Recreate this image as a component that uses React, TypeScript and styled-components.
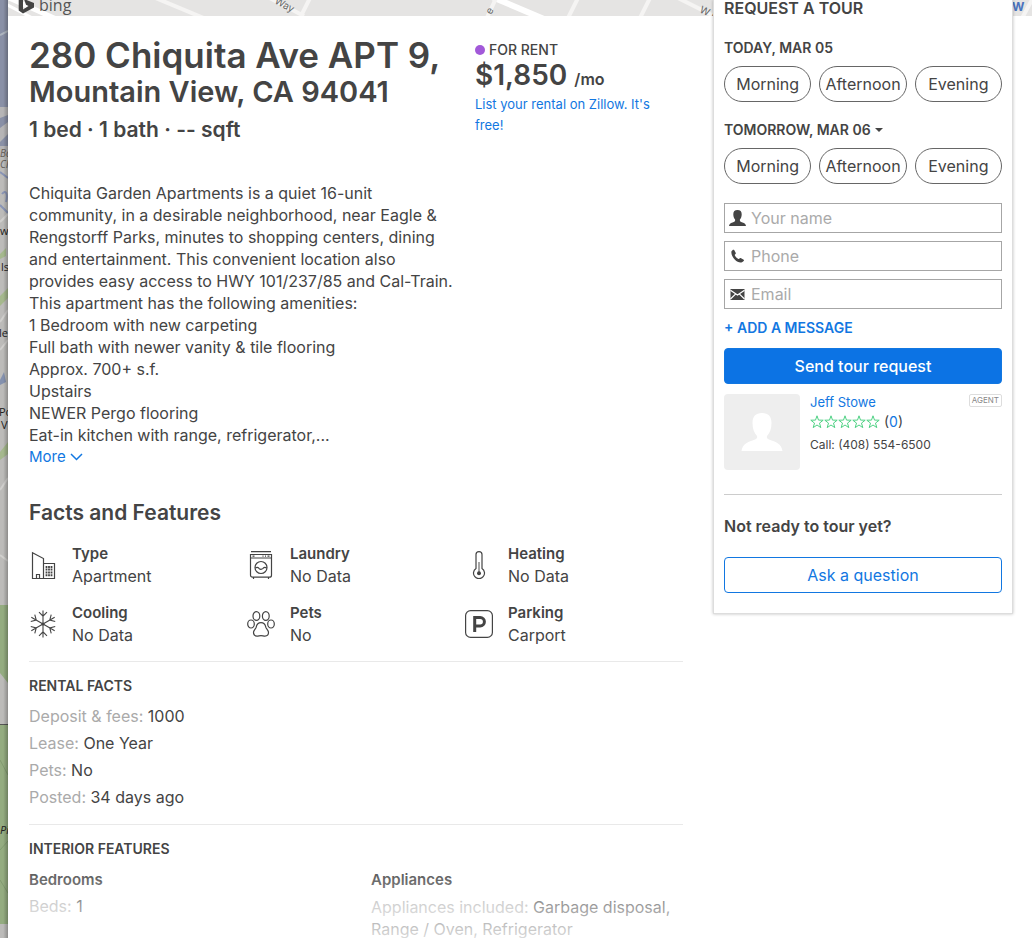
import React from "react";
import styled, { createGlobalStyle } from "styled-components";

const ink = "#444";
const blue = "#1277e1";
const font = 'Inter, "Liberation Sans", sans-serif';

const GlobalStyle = createGlobalStyle`
  *, *::before, *::after { box-sizing: border-box; }
  body { margin: 0; background: #fff; color: ${ink}; font-family: ${font}; font-size: 16px; line-height: 22px; }
  h1, h2, h3, h4, p, dl, dd { margin: 0; font-weight: inherit; font-size: inherit; }
  button, input { font: inherit; color: inherit; }
  a { color: ${blue}; text-decoration: none; }
`;

const Page = styled.div`
  display: grid;
  grid-template-columns: 8px minmax(0, 1fr);
  min-height: 100vh;
`;

const MapStrip = styled.div`
  position: relative;
  overflow: hidden;
  background: #bcbbb9;
  svg { position: absolute; top: 0; left: 0; }
  &::after {
    content: "";
    position: absolute;
    inset: 0;
    background: linear-gradient(to right, transparent 40%, rgba(0, 0, 0, 0.25));
  }
`;

const Sheet = styled.div`
  display: grid;
  grid-template-columns: minmax(0, 1fr) 300px 19px;
  grid-template-rows: 16px auto;
  background: #fff;
`;

const Banner = styled.div`
  grid-column: 1 / -1;
  grid-row: 1;
  overflow: hidden;
  background: #e5e4e3;
  svg { display: block; }
`;

const Main = styled.main`
  grid-column: 1;
  grid-row: 2;
  padding: 17px 30px 0 21px;
`;

const Summary = styled.header`
  display: grid;
  grid-template-columns: minmax(0, 1fr) 190px;
  column-gap: 30px;
  padding-right: 18px;
`;

const Address = styled.h1`
  font-weight: 600;
`;

const Street = styled.span`
  display: block;
  font-size: 35px;
  line-height: 44px;
  white-space: nowrap;
`;

const City = styled.span`
  display: block;
  font-size: 29px;
  line-height: 30px;
  white-space: nowrap;
`;

const Size = styled.p`
  margin-top: 10px;
  font-size: 21px;
  font-weight: 600;
  line-height: 26px;
`;

const PriceBox = styled.div`
  padding-top: 9px;
  font-size: 13px;
  line-height: 21px;
`;

const Status = styled.p`
  display: flex;
  align-items: center;
  gap: 4px;
  font-size: 14px;
  font-weight: 500;
  line-height: 16px;
`;

const Dot = styled.span`
  width: 10px;
  height: 10px;
  border-radius: 50%;
  background: #a259d9;
`;

const Price = styled.p`
  margin-bottom: 1px;
  font-size: 28px;
  font-weight: 600;
  line-height: 35px;
  small { font-size: 16px; line-height: 16px; }
`;

const ListLink = styled.a`
  display: block;
`;

const Description = styled.div`
  max-width: 424px;
  margin-top: 39px;
`;

const MoreButton = styled.button`
  display: flex;
  align-items: center;
  gap: 4px;
  padding: 0;
  border: 0;
  background: none;
  color: ${blue};
  font-size: 15px;
`;

const Heading = styled.h2`
  margin-top: 32px;
  font-size: 21px;
  font-weight: 600;
  line-height: 26px;
`;

const FactGrid = styled.div`
  display: grid;
  grid-template-columns: repeat(3, 1fr);
  row-gap: 15px;
  margin-top: 17px;
`;

const Fact = styled.div`
  display: flex;
  align-items: center;
  gap: 15px;
  h3 { font-size: 15px; font-weight: 600; }
`;

const Section = styled.section`
  margin-top: 15px;
  padding: 15px 0 13px;
  border-top: 1px solid #e9e9e9;
`;

const Collapsed = styled(Section)`
  position: relative;
  max-height: 114px;
  margin-top: 0;
  padding-bottom: 0;
  overflow: hidden;
  &::after {
    content: "";
    position: absolute;
    inset: auto 0 0 0;
    height: 78px;
    background: linear-gradient(rgba(255, 255, 255, 0), rgba(255, 255, 255, 0.8));
  }
`;

const Caps = styled.h3`
  margin-bottom: 8px;
  font-size: 14px;
  font-weight: 600;
  line-height: 18px;
`;

const Detail = styled.p<{ $wrapped?: boolean }>`
  padding: ${(p) => (p.$wrapped ? "3px 0 0" : "0")};
  line-height: ${(p) => (p.$wrapped ? "22px" : "27px")};
  span { color: #aaa; }
`;

const Columns = styled.div`
  display: grid;
  grid-template-columns: repeat(2, 1fr);
  column-gap: 30px;
`;

const SubHeading = styled.h4`
  font-size: 15px;
  font-weight: 600;
  line-height: 27px;
`;

const TourPanel = styled.aside`
  grid-column: 2;
  grid-row: 1 / 3;
  align-self: start;
  z-index: 1;
  padding: 0 10px 20px;
  border: 1px solid #ddd;
  border-top: 0;
  background: #fff;
  box-shadow: 0 0 3px rgba(0, 0, 0, 0.25);
`;

const PanelTitle = styled.h2`
  margin-bottom: 24px;
  font-weight: 600;
  line-height: 16px;
`;

const Day = styled.div`
  display: flex;
  align-items: center;
  margin-bottom: 10px;
  font-size: 14px;
  font-weight: 600;
  line-height: 16px;
`;

const DayPicker = styled.button`
  display: flex;
  align-items: center;
  gap: 4px;
  padding: 0;
  border: 0;
  background: none;
`;

const Slots = styled.div`
  display: grid;
  grid-template-columns: repeat(3, 1fr);
  gap: 8px;
  margin-bottom: 20px;
`;

const Slot = styled.button`
  height: 36px;
  padding: 0;
  border: 1px solid #666;
  border-radius: 18px;
  background: #fff;
`;

const Form = styled.form`
  display: grid;
  gap: 8px;
  margin-top: -1px;
`;

const Field = styled.label`
  display: flex;
  align-items: center;
  gap: 4px;
  height: 30px;
  padding-left: 4px;
  border: 1px solid #a6a6a6;
  svg { flex: none; }
  input {
    flex: 1;
    min-width: 0;
    padding: 0;
    border: 0;
    outline: 0;
    background: none;
  }
  input::placeholder { color: #aaa; opacity: 1; }
`;

const AddMessage = styled.button`
  justify-self: start;
  margin: 3px 0 4px;
  padding: 0;
  border: 0;
  background: none;
  color: ${blue};
  font-size: 14px;
  font-weight: 600;
  line-height: 16px;
`;

const WideButton = styled.button<{ $primary?: boolean }>`
  width: 100%;
  height: 36px;
  border: 1px solid ${blue};
  border-radius: 4px;
  background: ${(p) => (p.$primary ? "#0c73e4" : "#fff")};
  color: ${(p) => (p.$primary ? "#fff" : blue)};
  font-weight: ${(p) => (p.$primary ? 500 : 400)};
`;

const Agent = styled.div`
  display: grid;
  grid-template-columns: 76px 1fr auto;
  column-gap: 10px;
  align-items: start;
  margin: 10px 0 24px;
`;

const AgentInfo = styled.div`
  font-size: 13px;
  line-height: 16px;
`;

const Rating = styled.div`
  display: flex;
  align-items: center;
  gap: 4px;
  margin: 3px 0 6px;
  font-size: 14px;
  line-height: 18px;
`;

const Call = styled.p`
  font-size: 12px;
`;

const Tag = styled.span`
  padding: 0 2px;
  border: 1px solid #ddd;
  border-radius: 2px;
  color: #888;
  font-size: 8px;
  line-height: 11px;
`;

const NotReady = styled.h3`
  padding: 20px 0;
  border-top: 1px solid #ccc;
  font-weight: 600;
`;

const lineIcon = {
  width: 28,
  height: 28,
  viewBox: "0 0 28 28",
  fill: "none",
  stroke: ink,
  strokeWidth: 1.2,
  "aria-hidden": true,
} as const;

const BuildingIcon = () => (
  <svg {...lineIcon}>
    <path d="M3.500 27.500V1.800l11 5.700v20zM14.500 12.500h11v15h-11M7.500 27.500v-4h3v4" />
    <path d="M17.500 15v10.500M20 15v10.500M22.500 15v10.500" strokeWidth="1.800" strokeDasharray="2 0.600 2 1" />
  </svg>
);

const WasherIcon = () => (
  <svg {...lineIcon}>
    <path d="M4 .6h20M3.500 3.500h21v20.700a2 2 0 0 1-2 2h-17a2 2 0 0 1-2-2zM3.500 7h21M6.500 26.500v1.500M21.500 26.500v1.500" />
    <path d="M5.500 5.200h2M15.500 5.200h1M18 5.200h1M20.500 5.200h2" />
    <circle cx="14" cy="16.500" r="6" />
    <path d="M8.300 17c1.400-1 2.600-1 3.700.3 1.200 1.300 2.700 1.300 4 0 1.100-1.200 2.400-1.200 3.700-.3" />
  </svg>
);

const HeatIcon = () => (
  <svg {...lineIcon}>
    <path d="M11 17.500V3.600a3 3 0 0 1 6 0v13.900a5.500 5.500 0 1 1-6 0z" />
    <path d="M14 11v11" strokeWidth="1.500" stroke="#888" />
    <circle cx="14" cy="22.300" r="2" fill={ink} stroke="none" />
  </svg>
);

const SnowIcon = () => (
  <svg {...lineIcon} strokeWidth={1.1}>
    {[0, 60, 120, 180, 240, 300].map((angle) => (
      <path key={angle} transform={`rotate(${angle} 14 14)`} d="M14 14V.5M10 2.200 14 6.200l4-4" />
    ))}
    <circle cx="14" cy="14" r="1.600" fill={ink} stroke="none" />
  </svg>
);

const PawIcon = () => (
  <svg {...lineIcon}>
    <ellipse cx="9.400" cy="6" rx="3.400" ry="4.400" />
    <ellipse cx="18.800" cy="6" rx="3.400" ry="4.400" />
    <ellipse cx="4" cy="14" rx="3.300" ry="4" />
    <ellipse cx="24" cy="14" rx="3.300" ry="4" />
    <path d="M14 12.600c3 0 4.300 2 4.800 4.600.4 1.700 2.700 2.800 2.700 5.400 0 2.200-1.500 3.500-3.500 3.500-1.600 0-2.400-.5-4-.5s-2.400.5-4 .5c-2 0-3.500-1.300-3.500-3.500 0-2.600 2.300-3.700 2.700-5.400.5-2.600 1.800-4.600 4.800-4.600z" />
  </svg>
);

const ParkingIcon = () => (
  <svg {...lineIcon}>
    <rect x=".6" y=".6" width="26.800" height="26.800" rx="5" />
    <path d="M9.700 22V7.500h5.500a4.200 4.200 0 0 1 0 8.400H9.700" strokeWidth="3" />
  </svg>
);

const PersonIcon = () => (
  <svg width="18" height="18" viewBox="0 0 18 18" fill={ink} aria-hidden="true">
    <path d="M8.500 1c2.800 0 4.300 1.500 4.200 4.200 0 2.100-.6 4-1.800 5.200-.3 2 .6 2.300 2.600 3 2.100.7 3.300 1.500 3.500 3.600H0c.2-2.100 1.400-2.900 3.500-3.600 2-.7 2.900-1 2.600-3C4.900 9.200 4.300 7.300 4.300 5.200 4.200 2.500 5.700 1 8.500 1z" />
  </svg>
);

const PhoneIcon = () => (
  <svg width="18" height="18" viewBox="0 0 18 18" fill={ink} aria-hidden="true">
    <path d="M2.500 4.200c.9-1.300 2-2 2.700-1.100L6.800 6c.4.8-1.300 1.500-1 2.200.9 1.700 2 2.900 3.600 3.700.8.4 1.400-1.300 2.300-.9l3 1.800c.9.600-.3 2-1.700 2.500C8 17 1.300 9 2.500 4.200z" />
  </svg>
);

const MailIcon = () => (
  <svg width="18" height="18" viewBox="0 0 18 18" aria-hidden="true">
    <path fill={ink} d="M1.500 4h14v11h-14z" />
    <path fill="none" stroke="#fff" strokeWidth="1.200" d="m1.500 5.300 7 4.800 7-4.800M1.500 14l5-4.900M15.500 14l-5-4.900" />
  </svg>
);

const AvatarIcon = () => (
  <svg width="76" height="76" viewBox="0 0 76 76" aria-hidden="true">
    <rect width="76" height="76" rx="4" fill="#eee" />
    <path fill="#fff" d="M38 19c6.500 0 9.500 3.500 9.500 10 0 6-1.800 10-4.500 13-.5 1.800.2 3 2 3.600C52 48 57.500 50 58.500 57h-41C18.500 50 24 48 31 45.600c1.800-.6 2.500-1.800 2-3.600-2.700-3-4.500-7-4.500-13 0-6.500 3-10 9.500-10z" />
  </svg>
);

const Stars = () => (
  <svg width="70" height="14" viewBox="0 0 70 14" fill="none" stroke="#4fd184" aria-hidden="true">
    {[0, 14, 28, 42, 56].map((x) => (
      <path key={x} transform={`translate(${x} 0)`} d="M7 .8 8.500 5.100l4.700.1-3.700 2.900 1.300 4.500L7 10l-3.800 2.600 1.300-4.500L.8 5.200l4.700-.1z" />
    ))}
  </svg>
);

const BannerMap = () => (
  <svg width="1024" height="16" viewBox="8 0 1024 16" aria-hidden="true">
    <g fill="none" stroke="#fff">
      <path d="M0-6 72 26" strokeWidth="5" />
      <path d="M0 1 40 22" strokeWidth="3" />
      <path d="m485-6 66 28" strokeWidth="6" />
    </g>
    <g fill="none" stroke="#f5f4f3" strokeWidth="4">
      <path d="m146-6 72 30M262-6l42 22M312-6l-14 28M498-6l-14 30M580-6l-14 28M652-6l-14 28M670-6l56 28M1034-4l-14 26" />
    </g>
    <g fontFamily={font} fontSize="10" fill="#666">
      <text x="274" y="3" transform="rotate(28 274 3)">Way</text>
      <text x="491" y="15" transform="rotate(-60 491 15)">e</text>
      <text x="699" y="12" transform="rotate(25 699 12)">W M</text>
    </g>
    <text x="1003" y="11" fontFamily={font} fontSize="12" fontWeight="700" fill="#4a73bd">OW</text>
    <path fill="#444" d="M18.700-4 23-2.500V9.500L28.500 6 26 4.800 24-1l10 4v4.500l-11 6-4.300-3z" />
    <text x="39" y="11" fontFamily='"Open Sans", sans-serif' fontSize="16" fill="#555">bing</text>
  </svg>
);

const StripMap = () => (
  <svg width="8" height="938" viewBox="0 0 8 938" aria-hidden="true">
    <path fill="#8990a6" d="M0 0h8v152H0z" />
    <path fill="#b6b5b6" d="M0 107h8v8l-8 3zM0 128l8-6v12l-8 8zM0 146h8v10H0z" />
    <path fill="none" stroke="#aeb5bf" strokeWidth="2" d="m0 35 8-4" />
    <path fill="none" stroke="#8994b5" strokeWidth="2" d="m0 172 8 6M2 194c4-5 6 0 4 8M0 205l8 8" />
    <path fill="none" stroke="#d0cfcd" strokeWidth="2" d="m0 222 8-8M0 350l8-10M0 322l8-12M0 490l8-12M0 555l8 6" />
    <path fill="#a5b88d" d="m0 254 6-6v8l-6 3zM0 296l8-8v10l-8 8zM0 452l8-10v12l-8 6z" />
    <path fill="#8491ae" d="m0 380 4-8 2 10-6 3z" />
    <path fill="#94ac80" d="M0 605h8v78l-8-10zM0 725h8v199H0z" />
    <path stroke="#555" d="M0 724.500h8" />
    <path fill="none" stroke="#829b70" d="m0 760 8 15M0 850l8-9M0 880l8 13" />
    <g fontFamily='"Open Sans", sans-serif' fontSize="11" fill="#222">
      <g fontStyle="italic" fontSize="10" fill="#665f59">
        <text x="0" y="157">Ba</text>
        <text x="0" y="168">Cl</text>
      </g>
      <text x="0" y="235">w</text>
      <text x="1" y="271">ls</text>
      <text x="-1" y="337">le</text>
      <text x="-1" y="416">Po</text>
      <text x="1" y="429">V</text>
      <text x="0" y="834" fontStyle="italic">Pi</text>
    </g>
  </svg>
);

const facts = [
  { name: "Type", value: "Apartment", icon: <BuildingIcon /> },
  { name: "Laundry", value: "No Data", icon: <WasherIcon /> },
  { name: "Heating", value: "No Data", icon: <HeatIcon /> },
  { name: "Cooling", value: "No Data", icon: <SnowIcon /> },
  { name: "Pets", value: "No", icon: <PawIcon /> },
  { name: "Parking", value: "Carport", icon: <ParkingIcon /> },
];

const rentalFacts = [
  ["Deposit & fees:", "1000"],
  ["Lease:", "One Year"],
  ["Pets:", "No"],
  ["Posted:", "34 days ago"],
];

const amenities = [
  "1 Bedroom with new carpeting",
  "Full bath with newer vanity & tile flooring",
  "Approx. 700+ s.f.",
  "Upstairs",
  "NEWER Pergo flooring",
  "Eat-in kitchen with range, refrigerator,...",
];

const TimeSlots = () => (
  <Slots>
    {["Morning", "Afternoon", "Evening"].map((slot) => (
      <Slot key={slot} type="button">{slot}</Slot>
    ))}
  </Slots>
);

export default function App() {
  return (
    <Page>
      <GlobalStyle />
      <MapStrip><StripMap /></MapStrip>
      <Sheet>
        <Banner><BannerMap /></Banner>
        <Main>
          <Summary>
            <div>
              <Address>
                <Street>280 Chiquita Ave APT 9,</Street>
                <City>Mountain View, CA 94041</City>
              </Address>
              <Size>1 bed · 1 bath · -- sqft</Size>
            </div>
            <PriceBox>
              <Status><Dot />FOR RENT</Status>
              <Price>$1,850 <small>/mo</small></Price>
              <ListLink href="#list">List your rental on Zillow. It's free!</ListLink>
            </PriceBox>
          </Summary>

          <Description>
            <p>
              Chiquita Garden Apartments is a quiet 16-unit community, in a desirable neighborhood, near Eagle &amp;
              Rengstorff Parks, minutes to shopping centers, dining and entertainment. This convenient location also
              provides easy access to HWY 101/237/85 and Cal-Train.
            </p>
            <p>This apartment has the following amenities:</p>
            {amenities.map((line) => <p key={line}>{line}</p>)}
            <MoreButton type="button">
              More
              <svg width="13" height="8" viewBox="0 0 13 8" fill="none" stroke={blue} strokeWidth="1.500" aria-hidden="true">
                <path d="m1 1 5.500 5.500L12 1" />
              </svg>
            </MoreButton>
          </Description>

          <Heading>Facts and Features</Heading>
          <FactGrid>
            {facts.map((fact) => (
              <Fact key={fact.name}>
                {fact.icon}
                <div>
                  <h3>{fact.name}</h3>
                  <p>{fact.value}</p>
                </div>
              </Fact>
            ))}
          </FactGrid>

          <Section>
            <Caps>RENTAL FACTS</Caps>
            {rentalFacts.map(([name, value]) => (
              <Detail key={name}><span>{name}</span> {value}</Detail>
            ))}
          </Section>

          <Collapsed>
            <Caps>INTERIOR FEATURES</Caps>
            <Columns>
              <div>
                <SubHeading>Bedrooms</SubHeading>
                <Detail><span>Beds:</span> 1</Detail>
              </div>
              <div>
                <SubHeading>Appliances</SubHeading>
                <Detail $wrapped>
                  <span>Appliances included:</span> Garbage disposal, Range / Oven, Refrigerator
                </Detail>
              </div>
            </Columns>
          </Collapsed>
        </Main>

        <TourPanel>
          <PanelTitle>REQUEST A TOUR</PanelTitle>
          <Day>TODAY, MAR 05</Day>
          <TimeSlots />
          <Day>
            <DayPicker type="button">
              TOMORROW, MAR 06
              <svg width="8" height="4" viewBox="0 0 8 4" fill={ink} aria-hidden="true"><path d="M0 0h8L4 4z" /></svg>
            </DayPicker>
          </Day>
          <TimeSlots />
          <Form>
            <Field>
              <PersonIcon />
              <input type="text" placeholder="Your name" aria-label="Your name" />
            </Field>
            <Field>
              <PhoneIcon />
              <input type="tel" placeholder="Phone" aria-label="Phone" />
            </Field>
            <Field>
              <MailIcon />
              <input type="email" placeholder="Email" aria-label="Email" />
            </Field>
            <AddMessage type="button">+ ADD A MESSAGE</AddMessage>
            <WideButton type="button" $primary>Send tour request</WideButton>
          </Form>
          <Agent>
            <AvatarIcon />
            <AgentInfo>
              <a href="#agent">Jeff Stowe</a>
              <Rating><Stars /><span>(<a href="#reviews">0</a>)</span></Rating>
              <Call>Call: (408) 554-6500</Call>
            </AgentInfo>
            <Tag>AGENT</Tag>
          </Agent>
          <NotReady>Not ready to tour yet?</NotReady>
          <WideButton type="button">Ask a question</WideButton>
        </TourPanel>
      </Sheet>
    </Page>
  );
}
